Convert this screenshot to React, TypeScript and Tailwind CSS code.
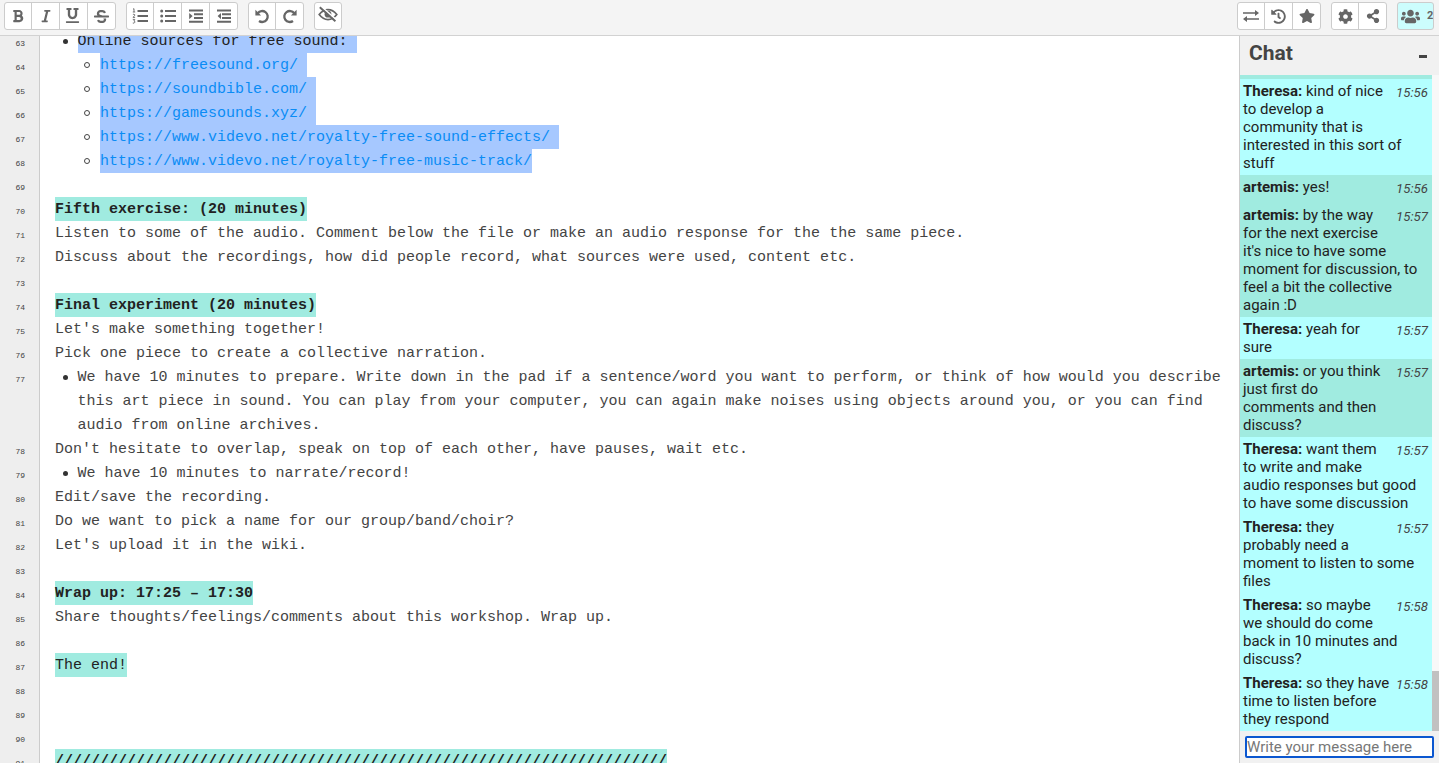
import React from 'react'
import {
    FaBold,
    FaCog,
    FaHistory,
    FaItalic,
    FaShareAlt,
    FaStar,
    FaStrikethrough,
    FaUnderline,
    FaUsers,
} from 'react-icons/fa'

type PadLine = {
    n: number
    text?: string
    rows?: string[]
    kind?: 'bullet' | 'link'
    mark?: boolean
    bold?: boolean
    selected?: boolean
    newline?: boolean
}

const lines: PadLine[] = [
    { n: 63, text: 'Online sources for free sound:', kind: 'bullet', selected: true, newline: true },
    { n: 64, text: 'https://freesound.org/', kind: 'link', newline: true },
    { n: 65, text: 'https://soundbible.com/', kind: 'link', newline: true },
    { n: 66, text: 'https://gamesounds.xyz/', kind: 'link', newline: true },
    { n: 67, text: 'https://www.videvo.net/royalty-free-sound-effects/', kind: 'link', newline: true },
    { n: 68, text: 'https://www.videvo.net/royalty-free-music-track/', kind: 'link' },
    { n: 69 },
    { n: 70, text: 'Fifth exercise: (20 minutes)', mark: true, bold: true },
    { n: 71, text: 'Listen to some of the audio. Comment below the file or make an audio response for the the same piece.' },
    { n: 72, text: 'Discuss about the recordings, how did people record, what sources were used, content etc.' },
    { n: 73 },
    { n: 74, text: 'Final experiment (20 minutes)', mark: true, bold: true },
    { n: 75, text: "Let's make something together!" },
    { n: 76, text: 'Pick one piece to create a collective narration.' },
    {
        n: 77,
        kind: 'bullet',
        rows: [
            'We have 10 minutes to prepare. Write down in the pad if a sentence/word you want to perform, or think of how would you describe',
            'this art piece in sound. You can play from your computer, you can again make noises using objects around you, or you can find',
            'audio from online archives.',
        ],
    },
    { n: 78, text: "Don't hesitate to overlap, speak on top of each other, have pauses, wait etc." },
    { n: 79, text: 'We have 10 minutes to narrate/record!', kind: 'bullet' },
    { n: 80, text: 'Edit/save the recording.' },
    { n: 81, text: 'Do we want to pick a name for our group/band/choir?' },
    { n: 82, text: "Let's upload it in the wiki." },
    { n: 83 },
    { n: 84, text: 'Wrap up: 17:25 – 17:30', mark: true, bold: true },
    { n: 85, text: 'Share thoughts/feelings/comments about this workshop. Wrap up.' },
    { n: 86 },
    { n: 87, text: 'The end!', mark: true },
    { n: 88 },
    { n: 89 },
    { n: 90 },
    { n: 91, text: '/'.repeat(68), mark: true, bold: true },
]

const messages = [
    { who: 'Theresa', time: '15:56', rows: ['kind of nice', 'to develop a', 'community that is', 'interested in this sort of', 'stuff'] },
    { who: 'artemis', time: '15:56', rows: ['yes!'] },
    {
        who: 'artemis',
        time: '15:57',
        rows: ['by the way', 'for the next exercise', "it's nice to have some", 'moment for discussion, to', 'feel a bit the collective', 'again :D'],
    },
    { who: 'Theresa', time: '15:57', rows: ['yeah for', 'sure'] },
    { who: 'artemis', time: '15:57', rows: ['or you think', 'just first do', 'comments and then', 'discuss?'] },
    { who: 'Theresa', time: '15:57', rows: ['want them', 'to write and make', 'audio responses but good', 'to have some discussion'] },
    { who: 'Theresa', time: '15:57', rows: ['they', 'probably need a', 'moment to listen to some', 'files'] },
    { who: 'Theresa', time: '15:58', rows: ['so maybe', 'we should do come', 'back in 10 minutes and', 'discuss?'] },
    { who: 'Theresa', time: '15:58', rows: ['so they have', 'time to listen before', 'they respond'] },
]

const ListOlIcon = () => (
    <svg width="16" height="16" viewBox="0 0 16 16" fill="none" stroke="currentColor">
        <path d="M5.5 3H16M5.5 8H16M5.5 13H16" strokeWidth="2" />
        <path d="M1 1.2l1-.5V4M.8 4h2.4M.9 6.6q1-.8 1.8 0T.9 9.4h2.2M.8 11.4h2L1.9 13q1.3 0 .9 1.3T.8 15" strokeWidth=".9" />
    </svg>
)

const ListUlIcon = () => (
    <svg width="16" height="16" viewBox="0 0 16 16" fill="currentColor">
        <path d="M5 2h11v2H5zM5 7h11v2H5zM5 12h11v2H5z" />
        <circle cx="1.7" cy="3" r="1.5" />
        <circle cx="1.7" cy="8" r="1.5" />
        <circle cx="1.7" cy="13" r="1.5" />
    </svg>
)

const IndentIcon = ({ out = false }: { out?: boolean }) => (
    <svg width="14" height="14" viewBox="0 0 14 14" fill="currentColor">
        <path d="M0 .5h14v2H0zM5 4.3h9v2H5zM5 8h9v2H5zM0 11.7h14v2H0z" />
        {out ? <path d="M4 4v6.2L.6 7.1z" /> : <path d="M.2 4v6.2l3.4-3.1z" />}
    </svg>
)

const UndoIcon = ({ redo = false }: { redo?: boolean }) => (
    <svg width="15" height="15" viewBox="0 0 15 15" className={redo ? '-scale-x-100' : ''}>
        <path d="M2.8 4.2A5.5 5.5 0 1 1 4 12" fill="none" stroke="currentColor" strokeWidth="2.3" />
        <path d="M.4.8v5.6h5.7z" fill="currentColor" />
    </svg>
)

const EyeOffIcon = () => (
    <svg width="20" height="18" viewBox="0 0 20 18" fill="none" stroke="currentColor" className="-translate-y-px">
        <path d="M1.2 8.6Q5 3.6 10 3.6t8.8 5Q15 13.6 10 13.6T1.2 8.6z" strokeWidth="1.7" />
        <circle cx="10" cy="8.2" r="3.4" fill="currentColor" stroke="none" />
        <path d="M3.4.6L19 14.4" stroke="#fff" strokeWidth="1.6" />
        <path d="M1.8 1.2l15.6 14" strokeWidth="1.9" />
    </svg>
)

const SwapIcon = () => (
    <svg width="16" height="14" viewBox="0 0 16 14" fill="currentColor">
        <path d="M0 3.2h12V1l4 3-4 3V4.8H0zM16 9.2H4V7l-4 3 4 3v-2.2h12z" />
    </svg>
)

const Group = ({ children }: { children: React.ReactNode }) => (
    <div className="flex h-7 divide-x divide-[#ccc] overflow-hidden rounded-[3px] border border-[#ccc] bg-white text-[#666]">
        {React.Children.map(children, (child) => (
            <button className="flex w-[28px] items-center justify-center first:w-[27px] last:w-[27px] only:w-[26px]">
                {child}
            </button>
        ))}
    </div>
)

const Toolbar = () => (
    <header className="flex h-9 shrink-0 justify-between border-b border-[#d2d2d2] bg-[#f4f4f4] pt-0.5 pl-1">
        <div className="flex gap-[10px]">
            <Group>
                <FaBold size={14} />
                <FaItalic size={14} />
                <FaUnderline size={15} className="-translate-x-px -translate-y-px" />
                <FaStrikethrough size={15} />
            </Group>
            <Group>
                <ListOlIcon />
                <ListUlIcon />
                <IndentIcon />
                <IndentIcon out />
            </Group>
            <Group>
                <UndoIcon />
                <UndoIcon redo />
            </Group>
            <Group>
                <EyeOffIcon />
            </Group>
        </div>
        <div className="flex gap-[10px]">
            <Group>
                <SwapIcon />
                <FaHistory size={15} />
                <FaStar size={16} />
            </Group>
            <Group>
                <FaCog size={15} />
                <FaShareAlt size={14} />
            </Group>
            <button className="mr-[5px] flex h-7 w-[37px] items-center gap-[7px] overflow-hidden rounded-[3px] border border-[#ccc] bg-[#ccfdfd] pl-[3px] text-[#666]">
                <FaUsers size={19} className="shrink-0" />
                <span className="text-[11px] font-bold">2</span>
            </button>
        </div>
    </header>
)

const Line = ({ line }: { line: PadLine }) => {
    const rows = line.rows ?? [line.text ?? '']
    let tone = 'inline-block h-6'
    if (line.kind === 'link') tone = 'inline-block h-6 bg-[#a6c8ff] text-[#0a8cf5]'
    if (line.selected) tone = 'inline-block h-6 bg-[#a6c8ff] text-[#222]'
    if (line.mark) tone = 'inline-block h-6 bg-[#a0ebe0] text-[#222]'

    return (
        <div className="flex">
            <div className="w-10 shrink-0 border-r border-[#ccc] bg-[#eee] pr-[14px] text-right text-[8px] text-[#444]">
                <span className="block h-6 pt-[3px] leading-6">{line.n}</span>
            </div>
            <div className="flex pl-[15px]">
                {line.kind === 'bullet' && (
                    <span className="flex h-6 w-[22.5px] items-center pl-[7.5px]">
                        <i className="h-[5px] w-[5px] rounded-full bg-[#333]" />
                    </span>
                )}
                {line.kind === 'link' && (
                    <span className="flex h-6 w-[45px] items-center pl-[29px]">
                        <i className="h-[6px] w-[6px] rounded-full border border-[#444]" />
                    </span>
                )}
                <div className={line.bold ? 'font-bold' : ''}>
                    {rows.map((row) => (
                        <div key={row} className="h-6">
                            {row && (
                                <span className={tone}>
                                    {row}
                                    {line.newline && ' '}
                                </span>
                            )}
                        </div>
                    ))}
                </div>
            </div>
        </div>
    )
}

const Chat = () => (
    <aside className="flex w-[200px] shrink-0 flex-col border-l border-[#ccc] bg-[#f1f1f1]">
        <div className="flex h-[39px] shrink-0 justify-between pr-3 pl-[9px] text-[#444]">
            <h1 className="text-[21px] leading-[34px] font-bold">Chat</h1>
            <span className="mt-[19px] h-[3px] w-2 bg-[#444]" />
        </div>
        <div className="flex h-[656px] shrink-0">
            <div className="w-[192px] bg-[#a0ebe0] pt-1">
                {messages.map((m, i) => (
                    <div
                        key={i}
                        className={`px-[3px] pt-[3px] text-[15px] leading-[18px] whitespace-nowrap text-[#222] ${
                            m.who === 'Theresa' ? 'bg-[#b3ffff]' : 'bg-[#a0ebe0]'
                        } ${m.rows.length === 1 ? 'pb-[7px]' : 'pb-[3px]'}`}
                    >
                        <div className="flex h-[18px] justify-between">
                            <span>
                                <b>{m.who}:</b> {m.rows[0]}
                            </span>
                            <time className="pt-0.5 pr-px text-[13.2px] text-[#444] italic">{m.time}</time>
                        </div>
                        {m.rows.slice(1).map((row) => (
                            <p key={row}>{row}</p>
                        ))}
                    </div>
                ))}
            </div>
            <div className="flex flex-1 items-end bg-[#f8f8f8]">
                <div className="h-[60px] w-full bg-[#c1c1c1]" />
            </div>
        </div>
        <div className="pt-[5px] pl-[5px]">
            <input
                placeholder="Write your message here"
                className="block h-[22px] w-[189px] rounded-[2px] border-2 border-[#0b57d0] bg-white text-[15px] placeholder:text-[#777]"
            />
        </div>
    </aside>
)

const App = () => {
    return (
        <div className="flex h-[763px] w-[1439px] flex-col overflow-hidden bg-white font-['Roboto',sans-serif]">
            <Toolbar />
            <div className="flex h-[727px]">
                <main className="flex-1 overflow-hidden font-['Liberation_Mono',monospace] text-[15px] leading-[25px] whitespace-pre text-[#444]">
                    <div className="-mt-[7px]">
                        {lines.map((line) => (
                            <Line key={line.n} line={line} />
                        ))}
                    </div>
                </main>
                <Chat />
            </div>
        </div>
    )
}

export default App
